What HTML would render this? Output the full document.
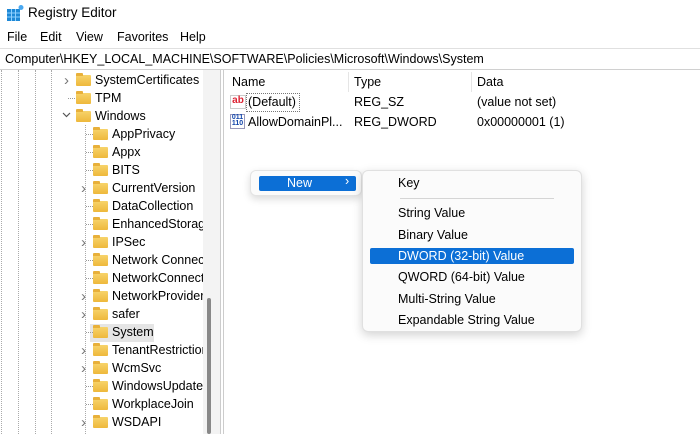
<!DOCTYPE html>
<html><head><meta charset="utf-8"><style>
*{margin:0;padding:0;box-sizing:border-box}
body{width:700px;height:434px;overflow:hidden;background:#fff;font-family:"Liberation Sans",sans-serif;font-size:12.5px;color:#000;position:relative}
.a{position:absolute;white-space:nowrap}
.f{position:absolute;width:15px;height:11px;background:linear-gradient(#f7d36a,#eeb83c);border-radius:1px}
.f:before{content:"";position:absolute;left:0;top:-2px;width:7px;height:3px;background:#e8b03a;border-radius:1px 1px 0 0}
.vl{position:absolute;top:70px;bottom:0;border-left:1px dotted #aaa}
.hl{position:absolute;width:7px;border-top:1px dotted #999}
.ch{position:absolute;color:#777;font-size:15px;line-height:15px}
.mi{position:absolute;left:398px;font-size:12.5px}
</style></head><body>
<!-- title -->
<svg class="a" style="left:6px;top:4px" width="18" height="18" viewBox="0 0 18 18">
<rect x="1" y="5" width="13" height="12" fill="#1e88d6"/>
<g stroke="#8fd0ff" stroke-width="1"><line x1="1" y1="9" x2="14" y2="9"/><line x1="1" y1="13" x2="14" y2="13"/><line x1="5.5" y1="5" x2="5.5" y2="17"/><line x1="9.5" y1="5" x2="9.5" y2="17"/></g>
<circle cx="15" cy="3.5" r="2.5" fill="#4aa8f0"/></svg>
<div class="a" style="left:28px;top:5px;font-size:13.5px">Registry Editor</div>
<div class="a" style="left:7px;top:30px">File</div>
<div class="a" style="left:40px;top:30px">Edit</div>
<div class="a" style="left:76px;top:30px">View</div>
<div class="a" style="left:117px;top:30px">Favorites</div>
<div class="a" style="left:180px;top:30px">Help</div>
<div class="a" style="left:0;top:48px;width:700px;height:22px;border-top:1px solid #e0e0e0;border-bottom:1px solid #d0d0d0"></div>
<div class="a" style="left:5px;top:52px">Computer\HKEY_LOCAL_MACHINE\SOFTWARE\Policies\Microsoft\Windows\System</div>
<!-- tree -->
<div class="vl" style="left:1px"></div><div class="vl" style="left:18px"></div><div class="vl" style="left:35px"></div><div class="vl" style="left:51px"></div>
<div class="vl" style="left:85px;top:125px"></div>
<div class="a" style="left:203px;top:70px;width:17px;height:364px;background:#f3f3f3"></div>
<div class="a" style="left:207px;top:298px;width:4px;height:136px;background:#888;border-radius:2px"></div>
<div class="a" style="left:220px;top:70px;width:1px;height:364px;background:#ccc"></div>
<div class="a" style="left:223px;top:70px;width:1px;height:364px;background:#ccc"></div>

<div class="ch" style="left:64px;top:73px">&#x203A;</div><div class="f" style="left:76px;top:75px"></div><div class="a" style="left:95px;top:73px">SystemCertificates</div>
<div class="hl" style="left:68px;top:98px"></div><div class="f" style="left:76px;top:93px"></div><div class="a" style="left:95px;top:91px">TPM</div>
<svg class="a" style="left:62px;top:112px" width="9" height="6"><path d="M1 1 L4.5 4.5 L8 1" fill="none" stroke="#555" stroke-width="1.2"/></svg><div class="f" style="left:76px;top:111px"></div><div class="a" style="left:95px;top:109px">Windows</div>
<div style="position:absolute;left:0;top:0">
<div class="hl" style="left:86px;top:134px"></div><div class="f" style="left:93px;top:129px"></div><div class="a" style="left:112px;top:127px">AppPrivacy</div>
<div class="hl" style="left:86px;top:152px"></div><div class="f" style="left:93px;top:147px"></div><div class="a" style="left:112px;top:145px">Appx</div>
<div class="hl" style="left:86px;top:170px"></div><div class="f" style="left:93px;top:165px"></div><div class="a" style="left:112px;top:163px">BITS</div>
<div class="ch" style="left:81px;top:181px">&#x203A;</div><div class="f" style="left:93px;top:183px"></div><div class="a" style="left:112px;top:181px">CurrentVersion</div>
<div class="hl" style="left:86px;top:206px"></div><div class="f" style="left:93px;top:201px"></div><div class="a" style="left:112px;top:199px">DataCollection</div>
<div class="hl" style="left:86px;top:224px"></div><div class="f" style="left:93px;top:219px"></div><div class="a" style="left:112px;top:217px;width:91px;overflow:hidden">EnhancedStorageDevices</div>
<div class="ch" style="left:81px;top:235px">&#x203A;</div><div class="f" style="left:93px;top:237px"></div><div class="a" style="left:112px;top:235px">IPSec</div>
<div class="hl" style="left:86px;top:260px"></div><div class="f" style="left:93px;top:255px"></div><div class="a" style="left:112px;top:253px;width:91px;overflow:hidden">Network Connections</div>
<div class="hl" style="left:86px;top:278px"></div><div class="f" style="left:93px;top:273px"></div><div class="a" style="left:112px;top:271px;width:91px;overflow:hidden">NetworkConnectivity</div>
<div class="ch" style="left:81px;top:289px">&#x203A;</div><div class="f" style="left:93px;top:291px"></div><div class="a" style="left:112px;top:289px;width:91px;overflow:hidden">NetworkProvider</div>
<div class="ch" style="left:81px;top:307px">&#x203A;</div><div class="f" style="left:93px;top:309px"></div><div class="a" style="left:112px;top:307px">safer</div>
<div class="a" style="left:90px;top:324px;width:64px;height:18px;background:#e5e5e5"></div>
<div class="hl" style="left:86px;top:332px"></div><div class="f" style="left:93px;top:327px"></div><div class="a" style="left:112px;top:325px">System</div>
<div class="ch" style="left:81px;top:343px">&#x203A;</div><div class="f" style="left:93px;top:345px"></div><div class="a" style="left:112px;top:343px;width:91px;overflow:hidden">TenantRestrictions</div>
<div class="ch" style="left:81px;top:361px">&#x203A;</div><div class="f" style="left:93px;top:363px"></div><div class="a" style="left:112px;top:361px">WcmSvc</div>
<div class="hl" style="left:86px;top:386px"></div><div class="f" style="left:93px;top:381px"></div><div class="a" style="left:112px;top:379px;width:91px;overflow:hidden">WindowsUpdate</div>
<div class="hl" style="left:86px;top:404px"></div><div class="f" style="left:93px;top:399px"></div><div class="a" style="left:112px;top:397px">WorkplaceJoin</div>
<div class="ch" style="left:81px;top:415px">&#x203A;</div><div class="f" style="left:93px;top:417px"></div><div class="a" style="left:112px;top:415px">WSDAPI</div>
</div>
<!-- list -->
<div class="a" style="left:348px;top:72px;width:1px;height:20px;background:#e5e5e5"></div>
<div class="a" style="left:471px;top:72px;width:1px;height:20px;background:#e5e5e5"></div>
<div class="a" style="left:232px;top:75px">Name</div><div class="a" style="left:354px;top:75px">Type</div><div class="a" style="left:477px;top:75px">Data</div>
<div class="a" style="left:230px;top:95px;width:16px;height:14px;background:#fff;border:1px solid #ccc;color:#d23;font-weight:bold;font-size:10px;line-height:10px;text-align:center">ab</div>
<div class="a" style="left:246px;top:93px;width:54px;height:19px;border:1px dotted #777"></div>
<div class="a" style="left:248px;top:95px">(Default)</div><div class="a" style="left:354px;top:95px">REG_SZ</div><div class="a" style="left:477px;top:95px">(value not set)</div>
<div class="a" style="left:230px;top:114px;width:15px;height:15px;border:1px solid #99b;color:#14a;font-weight:bold;font-size:7px;line-height:6px;text-align:center">011<br>110</div>
<div class="a" style="left:248px;top:115px">AllowDomainPl...</div><div class="a" style="left:354px;top:115px">REG_DWORD</div><div class="a" style="left:477px;top:115px">0x00000001 (1)</div>
<!-- menus -->
<div class="a" style="left:250px;top:170px;width:112px;height:26px;background:#fbfbfb;border:1px solid #e3e3e3;border-radius:6px;box-shadow:0 3px 8px rgba(0,0,0,.15)"></div>
<div class="a" style="left:259px;top:176px;width:97px;height:15px;background:#0c6fd6;border-radius:2px"></div>
<div class="a" style="left:287px;top:176px;color:#fff">New</div><div class="a" style="left:345px;top:174px;color:#fff">&#x203A;</div>
<div class="a" style="left:362px;top:170px;width:220px;height:162px;background:#fbfbfb;border:1px solid #e0e0e0;border-radius:6px;box-shadow:0 3px 10px rgba(0,0,0,.18)"></div>
<div class="mi" style="top:176px">Key</div>
<div class="a" style="left:400px;top:198px;width:154px;height:1px;background:#d5d5d5"></div>
<div class="mi" style="top:206px">String Value</div>
<div class="mi" style="top:228px">Binary Value</div>
<div class="a" style="left:370px;top:248px;width:204px;height:16px;background:#0c6fd6;border-radius:2px"></div>
<div class="mi" style="top:249px;color:#fff">DWORD (32-bit) Value</div>
<div class="mi" style="top:270px">QWORD (64-bit) Value</div>
<div class="mi" style="top:292px">Multi-String Value</div>
<div class="mi" style="top:313px">Expandable String Value</div>
</body></html>
